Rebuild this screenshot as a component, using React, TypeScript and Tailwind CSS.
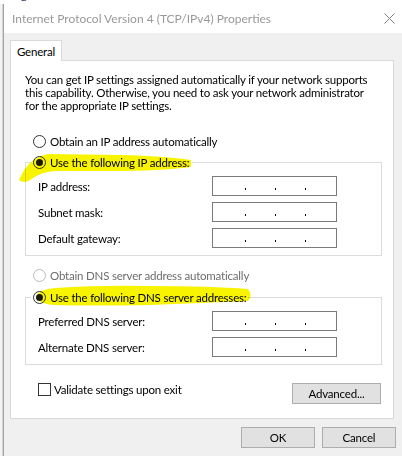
import React from "react";

function Radio({ checked, disabled }: { checked?: boolean; disabled?: boolean }) {
  return (
    <span
      className={
        disabled
          ? "w-[13px] h-[13px] rounded-full border border-[#bcbcbc] bg-white flex items-center justify-center shrink-0"
          : "w-[13px] h-[13px] rounded-full border border-[#333333] bg-white flex items-center justify-center shrink-0"
      }
    >
      {checked && <span className="w-[7px] h-[7px] rounded-full bg-[#1a1a1a]" />}
    </span>
  );
}

function IpField() {
  return (
    <div className="w-[125px] h-[20px] border border-[#7a7a7a] bg-white flex items-end pb-[5px] pl-[32px] gap-[29px]">
      <span className="w-[1px] h-[2px] bg-black" />
      <span className="w-[1px] h-[2px] bg-black" />
      <span className="w-[1px] h-[2px] bg-black" />
    </div>
  );
}

function FieldRow({ label }: { label: string }) {
  return (
    <div className="flex items-center h-[20px]">
      <span className="w-[174px] whitespace-nowrap">{label}</span>
      <IpField />
    </div>
  );
}

function Button({ label, w }: { label: string; w: string }) {
  return (
    <div
      className={
        w === "adv"
          ? "w-[89px] h-[21px] border border-[#adadad] bg-[#e1e1e1] flex items-center justify-center"
          : "w-[74px] h-[21px] border border-[#adadad] bg-[#e1e1e1] flex items-center justify-center"
      }
    >
      {label}
    </div>
  );
}

export default function App() {
  return (
    <div className="relative w-[402px] h-[456px] overflow-hidden bg-[#f0f0f0] text-[11.5px] tracking-[-0.2px] leading-[13px] text-black font-['Lato',sans-serif]">
      {/* background window toolbar (cut off) */}
      <div className="h-[4px] overflow-hidden bg-white">
        <div className="flex whitespace-nowrap -mt-[12px] text-[12px] tracking-normal leading-[14px] text-[#1b2a4a]">
          <span className="ml-[7px]">Organize ▾</span>
          <span className="ml-[36px]">Disable this network device</span>
          <span className="ml-[36px]">Rename this connection</span>
        </div>
      </div>

      <div className="flex h-[452px]">
        <div className="w-[4px] bg-[#f3f3f3]" />
        <div className="w-[1px] bg-[#d6d6d6]" />
        <div className="flex-1 border-l border-[#a3a3a3] flex flex-col">
          {/* title bar */}
          <div className="h-[29px] bg-white flex items-center justify-between pl-[8px] pr-[7px]">
            <span className="text-[#999999] text-[12px] tracking-normal whitespace-nowrap">Internet Protocol Version 4 (TCP/IPv4) Properties</span>
            <svg width="11" height="11" viewBox="0 0 11 11">
              <path d="M0.5 0.5 L10.5 10.5 M10.5 0.5 L0.5 10.5" stroke="#808080" strokeWidth="1" fill="none" />
            </svg>
          </div>

          {/* body */}
          <div className="flex-1 bg-[#f0f0f0] pt-[7px] px-[6px] flex flex-col">
            <div className="relative z-10 w-[52px] h-[21px] -mb-[1px] border-t border-l border-r border-[#d9d9d9] bg-white flex items-center justify-center">
              General
            </div>
            <div className="w-[384px] h-[359px] border border-[#d9d9d9] bg-white flex flex-col">
              <div className="pt-[12px] pl-[14px] whitespace-nowrap">
                <div>You can get IP settings assigned automatically if your network supports</div>
                <div>this capability. Otherwise, you need to ask your network administrator</div>
                <div>for the appropriate IP settings.</div>
              </div>

              <div className="mt-[21px] ml-[22px] h-[16px] flex items-center gap-[4px]">
                <Radio />
                <span>Obtain an IP address automatically</span>
              </div>

              <fieldset className="mt-[5px] ml-[14px] w-[357px] border border-[#dcdcdc] pb-[7px]">
                <legend className="ml-[5px] px-[2px]">
                  <div className="h-[16px] flex items-center gap-[4px]">
                    <Radio checked />
                    <span>Use the following IP address:</span>
                  </div>
                </legend>
                <div className="pt-[6px] pl-[12px] flex flex-col gap-[6px]">
                  <FieldRow label="IP address:" />
                  <FieldRow label="Subnet mask:" />
                  <FieldRow label="Default gateway:" />
                </div>
              </fieldset>

              <div className="mt-[11px] ml-[22px] h-[16px] flex items-center gap-[4px]">
                <Radio disabled />
                <span className="text-[#6d6d6d]">Obtain DNS server address automatically</span>
              </div>

              <fieldset className="mt-[6px] ml-[14px] w-[357px] border border-[#dcdcdc] pb-[7px]">
                <legend className="ml-[5px] px-[2px]">
                  <div className="h-[16px] flex items-center gap-[4px]">
                    <Radio checked />
                    <span>Use the following DNS server addresses:</span>
                  </div>
                </legend>
                <div className="pt-[6px] pl-[12px] flex flex-col gap-[6px]">
                  <FieldRow label="Preferred DNS server:" />
                  <FieldRow label="Alternate DNS server:" />
                </div>
              </fieldset>

              <div className="mt-[18px] pl-[27px] pr-[12px] flex items-start justify-between">
                <div className="flex items-center gap-[3px] h-[13px]">
                  <span className="w-[13px] h-[13px] border border-[#333333] bg-white shrink-0" />
                  <span className="whitespace-nowrap">Validate settings upon exit</span>
                </div>
                <Button label="Advanced..." w="adv" />
              </div>
            </div>

            <div className="mt-[8px] ml-[231px] flex gap-[7px]">
              <Button label="OK" w="std" />
              <Button label="Cancel" w="std" />
            </div>
          </div>
        </div>
      </div>

      {/* highlighter marks */}
      <svg
        className="absolute left-0 top-0 pointer-events-none mix-blend-multiply"
        width="402"
        height="456"
        viewBox="0 0 402 456"
      >
        <path
          d="M19 180 L24 170 Q33 157 48 154 L120 155 Q165 156 191 160 L191 167 Q160 171 110 171 L55 171 Q40 172 30 180 Q24 184 19 180 Z"
          fill="#f8f400"
        />
        <path
          d="M36 296 Q40 289 55 288 Q100 285 150 286 Q210 286 248 289 Q253 295 248 301 Q200 303 150 305 Q90 306 55 305 Q38 304 36 296 Z"
          fill="#f8f400"
        />
      </svg>
    </div>
  );
}
